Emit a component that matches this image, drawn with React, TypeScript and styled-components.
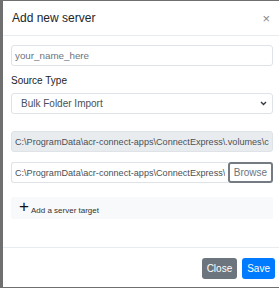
import React from 'react'
import styled, { createGlobalStyle } from 'styled-components'

const GlobalStyle = createGlobalStyle`
  html, body {
    margin: 0;
    padding: 0;
    background: #6f6f6f;
    overflow: hidden;
  }
  body {
    font-family: "Liberation Sans", Arial, sans-serif;
  }
`

const Modal = styled.div`
  margin: 1px 0 0 3px;
  width: 278px;
  background: #fff;
  display: flex;
  flex-direction: column;
`

const Header = styled.div`
  height: 34px;
  padding: 0 8px 0 9px;
  display: flex;
  align-items: center;
  justify-content: space-between;
  border-bottom: 1px solid #e9ecef;
`

const Title = styled.h5`
  margin: 0;
  font-size: 12px;
  font-weight: 400;
  color: #212529;
`

const CloseX = styled.span`
  font-size: 13px;
  color: #888;
  line-height: 1;
  margin-right: 3px;
`

const Body = styled.div`
  padding: 9px 8px 28px 8px;
  display: flex;
  flex-direction: column;
`

const Input = styled.input<{ $disabled?: boolean }>`
  box-sizing: border-box;
  height: 21px;
  width: 100%;
  padding: 0 3px;
  border: 1px solid #dfe3e7;
  border-radius: 3px;
  font-family: inherit;
  font-size: 9.1px;
  color: #495057;
  background: ${p => (p.$disabled ? '#e9ecef' : '#fff')};
  outline: none;
  &::placeholder {
    color: #6c757d;
    font-size: 9.8px;
  }
`

const Label = styled.label`
  font-size: 10px;
  color: #212529;
  margin: 9px 0 7px 0;
`

const SelectBox = styled.div`
  box-sizing: border-box;
  height: 21px;
  padding: 0 5px 0 9px;
  border: 1px solid #dfe3e7;
  border-radius: 3px;
  display: flex;
  align-items: center;
  justify-content: space-between;
  font-size: 10px;
  color: #495057;
`

const Group = styled.div<{ $top: number }>`
  display: flex;
  margin-top: ${p => p.$top}px;
`

const GroupInput = styled(Input)`
  flex: 1;
  min-width: 0;
  border-radius: 3px 0 0 3px;
  border-right: none;
`

const BrowseButton = styled.button`
  box-sizing: border-box;
  height: 21px;
  width: 45px;
  padding: 0;
  border: 2px solid #747b82;
  border-radius: 3px;
  background: #fff;
  color: #6c757d;
  font-family: inherit;
  font-size: 10px;
`

const TargetBox = styled.div`
  margin-top: 14px;
  height: 22px;
  padding: 0 8px;
  background: #f8f9fa;
  border-radius: 3px;
  display: flex;
  align-items: center;
  gap: 2px;
`

const Plus = styled.span`
  font-size: 17px;
  color: #111;
  line-height: 1;
  margin-top: -4px;
`

const TargetText = styled.span`
  font-size: 8px;
  color: #333;
  margin-top: 5px;
`

const Footer = styled.div`
  border-top: 1px solid #e9ecef;
  padding: 10px 6px 8px 8px;
  display: flex;
  justify-content: flex-end;
  gap: 5px;
`

const Button = styled.button<{ $primary?: boolean }>`
  height: 21px;
  padding: 0 5px;
  border: none;
  border-radius: 3px;
  color: #fff;
  font-family: inherit;
  font-size: 10px;
  background: ${p => (p.$primary ? '#007bff' : '#6c757d')};
`

const path = 'C:\\ProgramData\\acr-connect-apps\\ConnectExpress\\.volumes\\c'
const path2 = 'C:\\ProgramData\\acr-connect-apps\\ConnectExpress\\'

export default function App() {
  return (
    <>
      <GlobalStyle />
      <Modal>
        <Header>
          <Title>Add new server</Title>
          <CloseX>×</CloseX>
        </Header>
        <Body>
          <Input placeholder="your_name_here" />
          <Label>Source Type</Label>
          <SelectBox>
            <span>Bulk Folder Import</span>
            <svg width="7" height="5" viewBox="0 0 7 5">
              <path d="M1 1 L3.5 3.5 L6 1" stroke="#343a40" strokeWidth="1.4" fill="none" />
            </svg>
          </SelectBox>
          <Group $top={17}>
            <Input $disabled readOnly value={path} />
          </Group>
          <Group $top={10}>
            <GroupInput readOnly value={path2} />
            <BrowseButton>Browse</BrowseButton>
          </Group>
          <TargetBox>
            <Plus>+</Plus>
            <TargetText>Add a server target</TargetText>
          </TargetBox>
        </Body>
        <Footer>
          <Button>Close</Button>
          <Button $primary>Save</Button>
        </Footer>
      </Modal>
    </>
  )
}
